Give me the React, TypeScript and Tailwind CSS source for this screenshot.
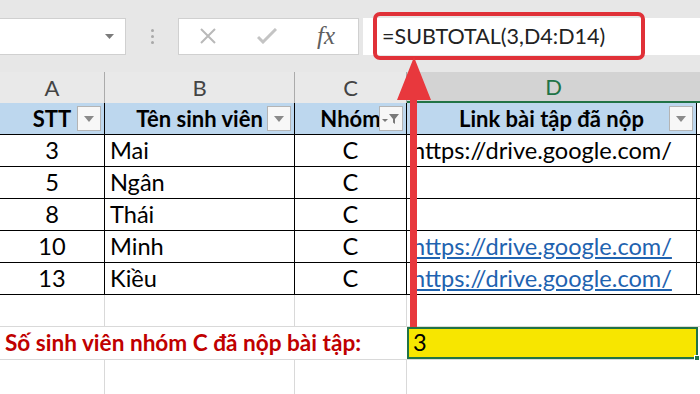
import React from 'react';

const font = { fontFamily: 'Lato, "Noto Sans", sans-serif' };

function FilterBtn({ active = false }: { active?: boolean }) {
  return (
    <span className="absolute right-[3px] top-[3px] flex h-[25px] w-[24px] items-center justify-center border border-[#b4b4b4] bg-[#f7f7f7]">
      {active ? (
        <svg width="20" height="14" viewBox="0 0 20 14">
          <path d="M1 7h6l-3 3z" fill="#7a7a7a" />
          <path d="M8 2h10l-4 5v5l-2-1.5V7z" fill="#7a7a7a" />
        </svg>
      ) : (
        <svg width="10" height="6" viewBox="0 0 10 6">
          <path d="M0 0h10L5 6z" fill="#8a8a8a" />
        </svg>
      )}
    </span>
  );
}

const rows = [
  { stt: '3', name: 'Mai', link: 'https://drive.google.com/', linked: false },
  { stt: '5', name: 'Ngân', link: '', linked: false },
  { stt: '8', name: 'Thái', link: '', linked: false },
  { stt: '10', name: 'Minh', link: 'https://drive.google.com/', linked: true },
  { stt: '13', name: 'Kiều', link: 'https://drive.google.com/', linked: true },
];

export default function App() {
  return (
    <div className="relative h-[394px] w-[700px] overflow-hidden bg-white text-[23.6px] text-black" style={font}>
      {/* formula bar */}
      <div className="flex h-[72px] items-center bg-[#e7e7e7]">
        <div className="flex h-[37px] w-[126px] items-center justify-end border border-l-0 border-[#d0d0d0] bg-white pr-[11px]">
          <svg width="9" height="5" viewBox="0 0 9 5">
            <path d="M0 0h9L4.5 5z" fill="#7b7b7b" />
          </svg>
        </div>
        <div className="flex w-[52px] flex-col items-center gap-[3px]">
          <span className="h-[3px] w-[3px] rounded-full bg-[#a9a9a9]" />
          <span className="h-[3px] w-[3px] rounded-full bg-[#a9a9a9]" />
          <span className="h-[3px] w-[3px] rounded-full bg-[#a9a9a9]" />
        </div>
        <div className="flex h-[37px] w-[181px] items-center border border-[#d0d0d0] bg-white">
          <svg className="ml-[20px]" width="18" height="18" viewBox="0 0 18 18">
            <path d="M2 2l14 14M16 2L2 16" stroke="#b9b9b9" strokeWidth="2" />
          </svg>
          <svg className="ml-[40px]" width="20" height="16" viewBox="0 0 20 16">
            <path d="M1 9l5 5L19 1" stroke="#c4c4c4" strokeWidth="3" fill="none" />
          </svg>
          <span className="ml-[40px] text-[25px] italic text-[#5f5f5f]" style={{ fontFamily: '"Liberation Serif", serif' }}>
            fx
          </span>
        </div>
        <div className="ml-[4px] flex h-[37px] flex-1 items-center bg-white">
          <span className="ml-[10px] flex h-[48px] items-center rounded-[7px] border-[4px] border-[#e03138] pl-[5px] pr-[36px] text-[21.5px] text-[#222]">
            =SUBTOTAL(3,D4:D14)
          </span>
        </div>
      </div>

      {/* column letters */}
      <div className="flex h-[31px] bg-[#e9e9e9] text-[22px] text-[#444]">
        <div className="flex w-[105px] items-center justify-center border-r border-[#ababab]">A</div>
        <div className="flex w-[190px] items-center justify-center border-r border-[#ababab]">B</div>
        <div className="flex w-[112px] items-center justify-center border-r border-[#ababab]">C</div>
        <div className="flex w-[293px] items-center justify-center border-b-2 border-[#217346] bg-[#d3d3d3] text-[#217346]">D</div>
      </div>

      {/* table header */}
      <div className="flex h-[32px] border-b border-black text-[22px] font-bold">
        <div className="relative flex w-[105px] items-center justify-center border-r border-black bg-[#bdd7ee]">
          STT
          <FilterBtn />
        </div>
        <div className="relative flex w-[190px] items-center justify-center border-r border-black bg-[#bdd7ee]">
          Tên sinh viên
          <FilterBtn />
        </div>
        <div className="relative flex w-[112px] items-center justify-center border-r border-black bg-[#bdd7ee]">
          Nhóm
          <FilterBtn active />
        </div>
        <div className="relative flex w-[290px] items-center justify-center border-r border-black bg-[#bdd7ee]">
          Link bài tập đã nộp
          <FilterBtn />
        </div>
      </div>

      {rows.map((r) => (
        <div key={r.stt} className="flex h-[32px] border-b border-black">
          <div className="flex w-[105px] items-center justify-center border-r border-black">{r.stt}</div>
          <div className="flex w-[190px] items-center border-r border-black pl-[5px]">{r.name}</div>
          <div className="flex w-[112px] items-center justify-center border-r border-black">C</div>
          <div className="flex w-[290px] items-center overflow-hidden whitespace-nowrap border-r border-black pl-[5px]">
            {r.link && (
              <span className={r.linked ? 'text-[#1f63b0] underline' : ''}>{r.link}</span>
            )}
          </div>
        </div>
      ))}

      {/* empty row */}
      <div className="flex h-[32px] border-b border-[#d9d9d9]">
        <div className="w-[105px] border-r border-[#d9d9d9]" />
        <div className="w-[190px] border-r border-[#d9d9d9]" />
        <div className="w-[112px] border-r border-[#d9d9d9]" />
        <div className="w-[290px]" />
      </div>

      {/* summary row */}
      <div className="flex h-[33px] border-b border-[#d9d9d9]">
        <div className="flex w-[407px] items-center whitespace-nowrap pl-[5px] text-[22.6px] font-bold text-[#c00000]">Số sinh viên nhóm C đã nộp bài tập:</div>
        <div className="relative flex w-[291px] items-center border-2 border-[#217346] bg-[#f7e600] pl-[4px]">
          3
          <span className="absolute bottom-[-4px] right-[-4px] h-[6px] w-[6px] border border-white bg-[#217346]" />
        </div>
      </div>

      {/* last row */}
      <div className="flex h-[34px]">
        <div className="w-[105px] border-r border-[#d9d9d9]" />
        <div className="w-[190px] border-r border-[#d9d9d9]" />
        <div className="w-[112px] border-r border-[#d9d9d9]" />
        <div className="w-[290px]" />
      </div>

      {/* annotation arrow */}
      <svg className="absolute left-[395px] top-[56px]" width="38" height="272" viewBox="0 0 38 272">
        <path d="M19 1L36 44H22V271H15V44H2z" fill="#e8383d" />
      </svg>
    </div>
  );
}
